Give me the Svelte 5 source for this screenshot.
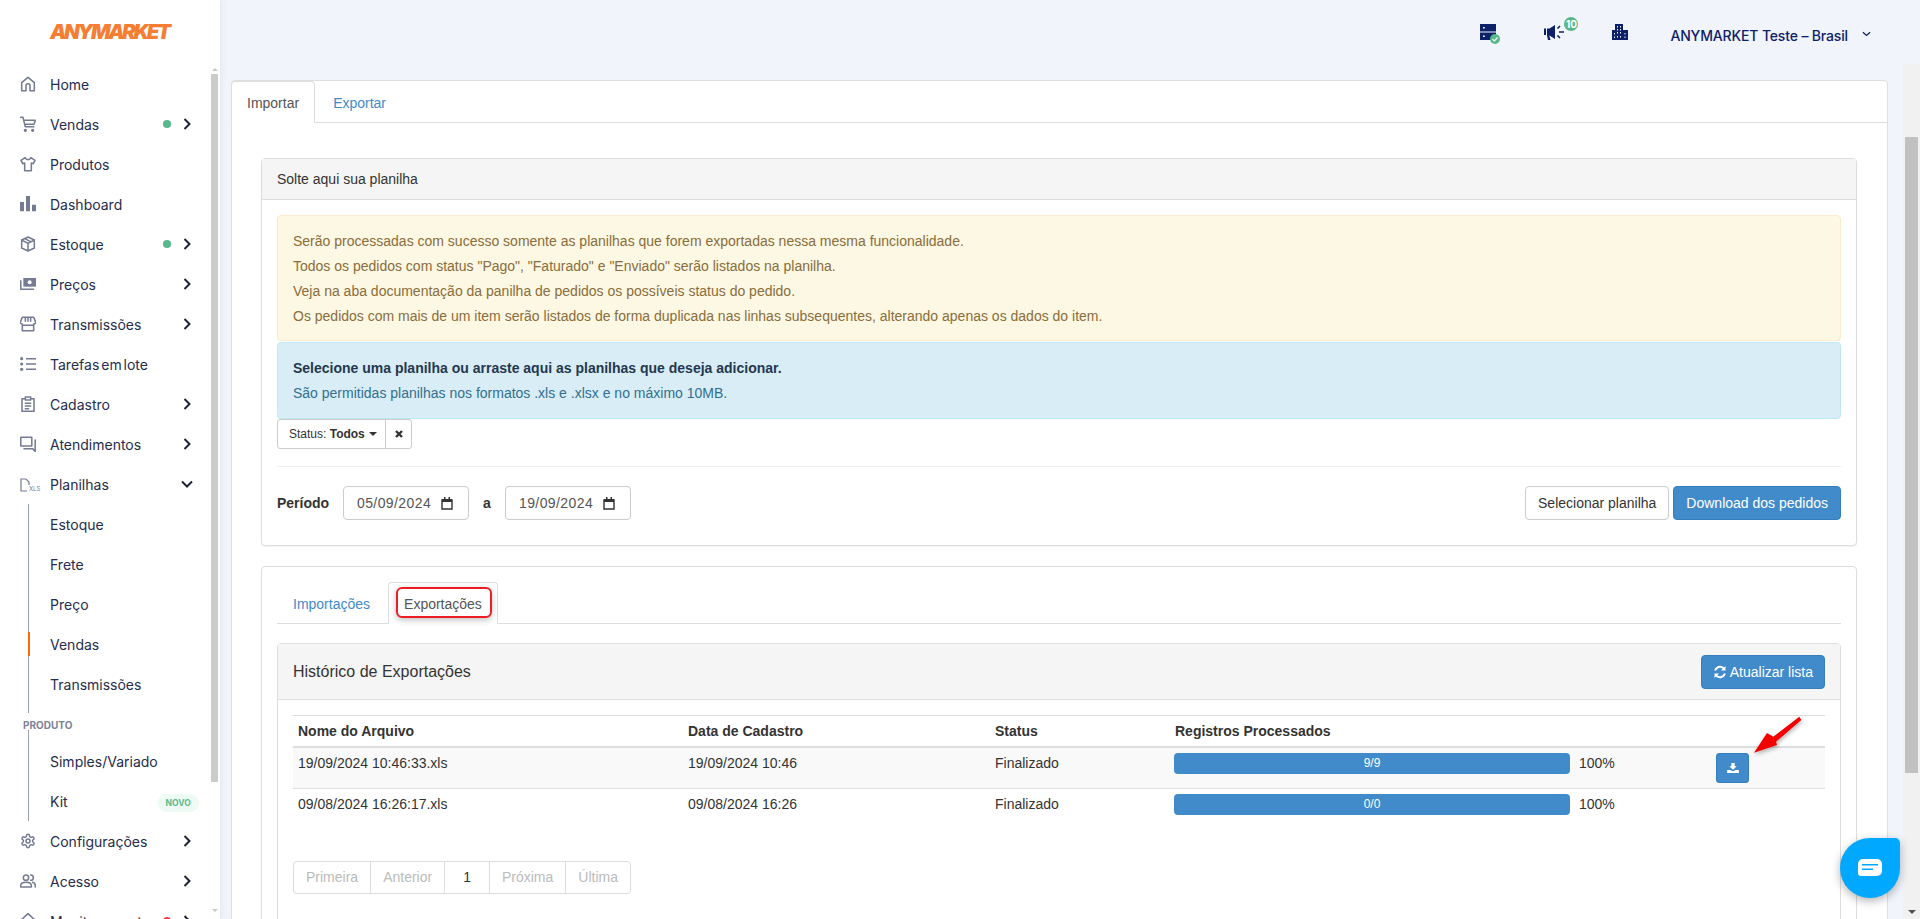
<script>
  const menu = [
    { label: 'Home', icon: 'home' },
    { label: 'Vendas', icon: 'cart', dot: true, arrow: true },
    { label: 'Produtos', icon: 'shirt' },
    { label: 'Dashboard', icon: 'bars' },
    { label: 'Estoque', icon: 'box', dot: true, arrow: true },
    { label: 'Preços', icon: 'money', arrow: true },
    { label: 'Transmissões', icon: 'store', arrow: true },
    { label: 'Tarefas em lote', icon: 'list', tight: true },
    { label: 'Cadastro', icon: 'clip', arrow: true },
    { label: 'Atendimentos', icon: 'chat', arrow: true },
    { label: 'Planilhas', icon: 'xls', open: true }
  ];
  const sub1 = ['Estoque', 'Frete', 'Preço', 'Vendas', 'Transmissões'];
  const rows = [
    { file: '19/09/2024 10:46:33.xls', date: '19/09/2024 10:46', bar: '9/9', btn: true },
    { file: '09/08/2024 16:26:17.xls', date: '09/08/2024 16:26', bar: '0/0', btn: false }
  ];
  const pages = ['Primeira', 'Anterior', '1', 'Próxima', 'Última'];
</script>

{#snippet icon(name)}
  <svg class="ic" viewBox="0 0 24 24" fill="none" stroke="currentColor" stroke-width="2.300" stroke-linecap="round" stroke-linejoin="round">
    {#if name === 'home'}
      <path d="M2.500 10 12 2l9.500 8v12H15v-7.500a3 3 0 0 0-6 0V22H2.500z" />
    {:else if name === 'cart'}
      <path d="M1 2h3.500l3.300 14h13M5.500 6.500H23l-2 6H7" /><circle cx="8" cy="21.500" r="1.300" fill="currentColor" /><circle cx="19" cy="21.500" r="1.300" fill="currentColor" />
    {:else if name === 'shirt'}
      <path d="M7.500 2.500 1.500 6.500 4 11.500l3-1V22h10V10.500l3 1 2.500-5-6-4c-1 2-2.600 3-4.500 3S8.500 4.500 7.500 2.500z" />
    {:else if name === 'bars'}
      <path fill="currentColor" stroke="none" d="M0 9h6v14H0zM9 0h6v23H9zM18 13h6v10h-6z" />
    {:else if name === 'box'}
      <path d="M12 1.500 2.500 6v12l9.500 4.500 9.500-4.500V6zM2.500 6l9.500 5 9.500-5M12 11v11.500M7 3.800l9.500 5" />
    {:else if name === 'money'}
      <path d="M5 3h19v13H5z" fill="currentColor" stroke="none" /><circle cx="14.500" cy="9.500" r="3" fill="#fff" stroke="none" /><path d="M1.200 7v13h19" />
    {:else if name === 'store'}
      <path d="M3.500 2h17l3 7a3 3 0 0 1-3 3v10h-17V12a3 3 0 0 1-3-3zM3.500 14h17M8 2v6M12 2v6M16 2v6" />
    {:else if name === 'list'}
      <circle cx="2.500" cy="4" r="2.400" fill="currentColor" stroke="none" /><circle cx="2.500" cy="12" r="2.400" fill="currentColor" stroke="none" /><circle cx="2.500" cy="20" r="2.400" fill="currentColor" stroke="none" /><path d="M9 4h15M9 12h15M9 20h15" stroke-linecap="butt" />
    {:else if name === 'clip'}
      <path d="M8 4H3v19h18V4h-5M8 1.500h8V6H8zM8 11h8M8 15h8M8 19h5" />
    {:else if name === 'chat'}
      <path d="M1.200 2h16.500v13H1.200zM22.800 6v17l-4-4H6" />
    {:else if name === 'gear'}
      <path d="M12.220 2h-.44a2 2 0 0 0-2 2v.18a2 2 0 0 1-1 1.730l-.43.250a2 2 0 0 1-2 0l-.15-.080a2 2 0 0 0-2.730.730l-.22.380a2 2 0 0 0 .730 2.730l.15.100a2 2 0 0 1 1 1.720v.510a2 2 0 0 1-1 1.740l-.15.090a2 2 0 0 0-.730 2.730l.22.380a2 2 0 0 0 2.730.730l.15-.080a2 2 0 0 1 2 0l.43.250a2 2 0 0 1 1 1.730V20a2 2 0 0 0 2 2h.44a2 2 0 0 0 2-2v-.18a2 2 0 0 1 1-1.730l.43-.250a2 2 0 0 1 2 0l.15.080a2 2 0 0 0 2.730-.730l.22-.390a2 2 0 0 0-.730-2.730l-.15-.080a2 2 0 0 1-1-1.740v-.5a2 2 0 0 1 1-1.740l.15-.090a2 2 0 0 0 .730-2.730l-.22-.380a2 2 0 0 0-2.730-.730l-.15.080a2 2 0 0 1-2 0l-.43-.250a2 2 0 0 1-1-1.730V4a2 2 0 0 0-2-2z" /><circle cx="12" cy="12" r="3" />
    {:else if name === 'users'}
      <circle cx="9" cy="7" r="4" /><path d="M1 21v-2c0-3 3-5 8-5s8 2 8 5v2zM16 3a4 4 0 0 1 0 8M19 14c2.500.6 4 2.500 4 5v2" />
    {:else if name === 'mon'}
      <path d="M12 1 1 11h3v11h16V11h3zM9 22v-6h6v6" />
    {/if}
  </svg>
{/snippet}

<div class="shell">
  <aside class="side">
    <div class="logo">ANYMARKET</div>
    <nav class="nav">
      {#each menu as m}
        <div class="item">
          <span class="ico">
            {#if m.icon === 'xls'}
              <span class="xls"><svg viewBox="0 0 10 14" fill="none" stroke="currentColor" stroke-width="1.200"><path d="M7 13H1V1h5l3 3v3" /></svg><small>XLS</small></span>
            {:else}
              {@render icon(m.icon)}
            {/if}
          </span>
          <span class="lbl" class:tight={m.tight}>{m.label}</span>
          {#if m.dot}<span class="dot"></span>{/if}
          {#if m.arrow}
            <svg class="chev" viewBox="0 0 10 14"><path d="M2.500 2 7.500 7l-5 5" /></svg>
          {/if}
          {#if m.open}
            <svg class="chev down" viewBox="0 0 14 10"><path d="M2 2.500 7 7.500l5-5" /></svg>
          {/if}
        </div>
      {/each}
      <div class="subs first">
        {#each sub1 as s}
          <div class="sub" class:cur={s === 'Vendas'}>{s}</div>
        {/each}
      </div>
      <div class="group">PRODUTO</div>
      <div class="subs second">
        <div class="sub">Simples/Variado</div>
        <div class="sub">Kit<span class="novo">NOVO</span></div>
      </div>
      <div class="item"><span class="ico">{@render icon('gear')}</span><span class="lbl">Configurações</span><svg class="chev" viewBox="0 0 10 14"><path d="M2.500 2 7.500 7l-5 5" /></svg></div>
      <div class="item"><span class="ico">{@render icon('users')}</span><span class="lbl">Acesso</span><svg class="chev" viewBox="0 0 10 14"><path d="M2.500 2 7.500 7l-5 5" /></svg></div>
      <div class="item"><span class="ico">{@render icon('mon')}</span><span class="lbl">Monitoramento</span><span class="dot red"></span><svg class="chev" viewBox="0 0 10 14"><path d="M2.500 2 7.500 7l-5 5" /></svg></div>
    </nav>
    <div class="sb-side"><i class="up"></i><b></b></div>
    <i class="sb-side-dn"></i>
  </aside>

  <div class="main">
    <header class="top">
      <span class="ti srv">
        <svg viewBox="0 0 16 16"><path fill="#0c2169" fill-rule="evenodd" d="M0 0h16v7.400H0zM0 8.600h16V16H0zM3 3v1.500h1.800V3zM3 11.500V13h1.800v-1.500z" /></svg>
        <em><svg viewBox="0 0 10 10"><path d="M2.500 5.200 4.300 7l3.200-3.500" fill="none" stroke="#fff" stroke-width="1.200" /></svg></em>
      </span>
      <span class="ti meg">
        <svg viewBox="0 0 21 16"><path fill="#0c2169" d="M0 4.500h2v6.500H0zM3 4.500h2.500L11 1v14l-5.500-3.500H5.300L6.500 16H4l-1-4.500z" /><path stroke="#0c2169" stroke-width="1.600" d="M13.500 4.500 16 2M15 8h5M13.500 11.500l2.500 2.500" /></svg>
        <em class="n">10</em>
      </span>
      <span class="ti bld">
        <svg viewBox="0 0 16 16"><path fill="#0c2169" fill-rule="evenodd" d="M3 0h8v6h5v10H0V6h3zM5 2v1.500h1V2zM8 2v1.500h1V2zM5 5v1.500h1V5zM8 5v1.500h1V5zM5 8v1.500h1V8zM8 8v1.500h1V8zM2 9v1.500h1V9zM12.500 9v1.500h1V9zM2 12.500V14h1v-1.500zM5 12v1.500h1V12zM8 12v1.500h1V12zM12.500 12.500V14h1v-1.500z" /></svg>
      </span>
      <span class="acct">ANYMARKET Teste – Brasil</span>
      <svg class="acct-chev" viewBox="0 0 10 6"><path d="M1 1l4 3.500L9 1" /></svg>
    </header>

    <section class="card">
      <div class="tabs">
        <span class="tab on">Importar</span>
        <span class="tab link">Exportar</span>
      </div>
      <div class="card-body">
        <div class="panel">
          <div class="ph">Solte aqui sua planilha</div>
          <div class="pb first">
            <div class="alert warn">
              <p>Serão processadas com sucesso somente as planilhas que forem exportadas nessa mesma funcionalidade.</p>
              <p>Todos os pedidos com status "Pago", "Faturado" e "Enviado" serão listados na planilha.</p>
              <p>Veja na aba documentação da panilha de pedidos os possíveis status do pedido.</p>
              <p>Os pedidos com mais de um item serão listados de forma duplicada nas linhas subsequentes, alterando apenas os dados do item.</p>
            </div>
            <div class="alert info">
              <p><strong>Selecione uma planilha ou arraste aqui as planilhas que deseja adicionar.</strong></p>
              <p>São permitidas planilhas nos formatos .xls e .xlsx e no máximo 10MB.</p>
            </div>
            <div class="status">
              <span class="st-main">Status: <strong>Todos</strong><i class="caret"></i></span>
              <span class="st-x"><svg viewBox="0 0 10 10"><path d="M2 2l6 6M8 2l-6 6" /></svg></span>
            </div>
            <hr />
            <div class="period">
              <strong class="plabel">Período</strong>
              <span class="date">05/09/2024{@render cal()}</span>
              <strong class="a">a</strong>
              <span class="date">19/09/2024{@render cal()}</span>
              <span class="grow"></span>
              <span class="btn def">Selecionar planilha</span>
              <span class="btn pri">Download dos pedidos</span>
            </div>
          </div>
        </div>

        <div class="panel second">
          <div class="pb">
            <div class="tabs sub-tabs">
              <span class="tab link">Importações</span>
              <span class="tab on">Exportações<span class="hl"></span></span>
            </div>
            <div class="hist">
              <div class="hh">
                <span>Histórico de Exportações</span>
                <span class="btn pri ref">
                  <svg viewBox="0 0 14 14"><path fill="#fff" d="M12.500 1v4.500H8l1.700-1.700A4 4 0 0 0 3.200 5.500H1.200A6 6 0 0 1 11.100 2.400zM1.500 13V8.500H6L4.300 10.200a4 4 0 0 0 6.500-1.700h2a6 6 0 0 1-9.900 3.100z" /></svg>
                  Atualizar lista
                </span>
              </div>
              <div class="hb">
                <table>
                  <colgroup><col class="c1" /><col class="c2" /><col class="c3" /><col class="c4" /><col class="c5" /><col /></colgroup>
                  <thead>
                    <tr><th>Nome do Arquivo</th><th>Data de Cadastro</th><th>Status</th><th colspan="3">Registros Processados</th></tr>
                  </thead>
                  <tbody>
                    {#each rows as r, i}
                      <tr class:odd={i === 0}>
                        <td>{r.file}</td>
                        <td>{r.date}</td>
                        <td>Finalizado</td>
                        <td><div class="bar">{r.bar}</div></td>
                        <td class="pct">100%</td>
                        <td>
                          {#if r.btn}
                            <span class="dl"><svg viewBox="0 0 14 12"><path fill="#fff" d="M5 0h4v4h2.500L7 8 2.500 4H5zM0 8.500h3.500L7 10l3.500-1.500H14V12H0z" /></svg></span>
                          {/if}
                        </td>
                      </tr>
                    {/each}
                  </tbody>
                </table>
                <div class="pager">
                  {#each pages as p}
                    <span class:cur={p === '1'}>{p}</span>
                  {/each}
                </div>
              </div>
            </div>
          </div>
        </div>
      </div>
    </section>
  </div>

  <div class="sb-page"><b></b><i class="dn"></i></div>

  <svg class="arrow" viewBox="0 0 56 46"><path fill="#f40000" d="M4 40.700 17 21 23.300 24.700 49.300 4.700 51.300 8 26 29.700 27 33z" /></svg>
  <div class="chatb">
    <svg viewBox="0 0 24 18"><path fill="#fff" fill-rule="evenodd" d="M5 0h14a5 5 0 0 1 5 5v7a5 5 0 0 1-5 5H3a3 3 0 0 1-3-3V5a5 5 0 0 1 5-5zM4 5v1.500h16V5zM4 9.500V11h11V9.500z" /></svg>
  </div>
</div>

{#snippet cal()}
  <svg class="cal" viewBox="0 0 12 13"><path fill="none" stroke="#333" stroke-width="1.400" d="M1 3h10v9H1z" /><path fill="#333" d="M1 2h10v3H1zM3 0h1.500v2H3zM7.500 0H9v2H7.500z" /></svg>
{/snippet}

<style>
  :global(body) { margin: 0; background: #f1f4fa; }
  .shell { position: relative; display: flex; height: 919px; width: 1920px; overflow: hidden; background: #f1f4fa; font-family: "Liberation Sans", Arial, sans-serif; font-size: 14px; color: #333; }

  .side { position: relative; width: 220px; flex: none; background: #fff; font-family: Inter, sans-serif; box-sizing: border-box; box-shadow: 1px 0 6px rgba(60,70,110,.08); }
  .logo { height: 64px; padding-top: 21px; box-sizing: border-box; padding-left: 50px; color: #f57e33; font-weight: 900; font-style: italic; font-size: 20.500px; letter-spacing: -2.350px; line-height: 22px; }
  .nav { display: flex; flex-direction: column; }
  .item { display: flex; align-items: center; height: 40px; padding-left: 20px; color: #262c4d; font-size: 14px; }
  .ico { width: 16px; height: 16px; margin-right: 14px; color: #757b93; display: flex; }
  .ic { width: 16px; height: 16px; }
  .lbl { flex: 1; white-space: nowrap; }
  .lbl.tight { word-spacing: -2px; }
  .dot { width: 8px; height: 8px; border-radius: 50%; background: #57b88a; margin-right: 11px; }
  .dot.red { background: #f03a3a; }
  .chev { width: 10px; height: 14px; fill: none; stroke: #1e2238; stroke-width: 2; margin-right: 28px; margin-left: 0; }
  .chev.down { width: 14px; height: 10px; margin-right: 26px; }
  .xls { display: flex; align-items: flex-end; }
  .xls svg { width: 10px; height: 14px; }
  .xls small { font-size: 6px; line-height: 7px; margin-left: -1px; letter-spacing: 0; }
  .subs { border-left: 1px solid #9aa0b8; margin-left: 28px; }
  .subs.first { padding-bottom: 9px; }
  .subs.second { padding-top: 11px; }
  .sub { position: relative; display: flex; align-items: center; height: 40px; padding-left: 21px; color: #262c4d; }
  .sub.cur::before { content: ""; position: absolute; left: -1px; top: 8px; width: 2px; height: 24px; background: #ff6a00; }
  .group { height: 14px; margin: 3px 0 0 23px; font-size: 10px; font-weight: 700; line-height: 18px; color: #7d8296; letter-spacing: 0; }
  .novo { margin: 3px 0 0 90px; width: 41px; height: 18px; border-radius: 9px; background: #edfbf4; color: #5fb98f; font-size: 8.500px; font-weight: 700; display: flex; align-items: center; justify-content: center; }
  .sb-side { position: absolute; left: 211px; top: 68px; width: 7px; display: flex; flex-direction: column; }
  .sb-side b { display: block; height: 708px; background: #cbcbcb; margin-top: 3px; }
  .sb-side i { display: block; width: 0; height: 0; border: 3px solid transparent; margin: 0 auto; }
  .sb-side .up { border-bottom-color: #c9c9c9; border-top: 0; }
  .sb-side-dn { position: absolute; left: 212px; top: 909px; border: 3px solid transparent; border-top-color: #c9c9c9; border-bottom: 0; }

  .main { flex: 1; min-width: 0; padding: 0 32px 0 11px; }
  .top { height: 80px; display: flex; align-items: center; color: #0c2169; box-sizing: border-box; padding: 0 0 16px 0; justify-content: flex-end; }
  .ti { position: relative; display: block; }
  .ti > svg { display: block; }
  .srv { width: 16px; height: 16px; margin-right: 48px; }
  .srv > svg { width: 16px; height: 16px; }
  .srv em { position: absolute; left: 10px; top: 10px; width: 10px; height: 10px; border-radius: 50%; background: #57b88a; display: block; }
  .srv em svg { display: block; width: 10px; height: 10px; }
  .meg { width: 21px; height: 16px; margin-right: 47px; }
  .meg > svg { width: 21px; height: 16px; }
  .meg .n { position: absolute; left: 20px; top: -7px; width: 14px; height: 14px; border-radius: 50%; background: #57b88a; color: #fff; font: 700 10px/14px Inter, sans-serif; text-align: center; }
  .bld { width: 16px; height: 16px; margin-right: 42px; }
  .bld svg { width: 16px; height: 16px; }
  .acct { font: 500 14px Inter, sans-serif; color: #0c2169; white-space: nowrap; letter-spacing: -.15px; margin-top: 6px; }
  .acct-chev { width: 9px; height: 6px; margin: 4px 17px 0 14px; fill: none; stroke: #0c2169; stroke-width: 1.400; }

  .card { background: #fff; border: 1px solid #dfdfdf; border-radius: 4px; height: 900px; box-sizing: border-box; }
  .tabs { display: flex; border-bottom: 1px solid #ddd; height: 41px; box-sizing: content-box; }
  .tab { position: relative; height: 42px; box-sizing: border-box; padding: 11px 15px 0; line-height: 20px; border: 1px solid transparent; border-radius: 4px 4px 0 0; margin-right: 2px; }
  .tab.on { background: #fff; border-color: #ddd; border-bottom-color: #fff; color: #555; margin-bottom: -1px; }
  .tab.link { color: #428bca; }
  .card > .tabs .tab:first-child { margin-left: -1px; }
  .card-body { padding: 35px 30px 0 29px; }
  .panel { border: 1px solid #ddd; border-radius: 4px; background: #fff; box-shadow: 0 1px 1px rgba(0,0,0,.05); }
  .panel.second { margin-top: 20px; }
  .ph { background: #f5f5f5; border-bottom: 1px solid #ddd; height: 40px; line-height: 40px; padding-left: 15px; }
  .pb { padding: 15px; }
  .pb.first { padding-bottom: 25px; }
  .alert { border: 1px solid; border-radius: 4px; padding: 13px 15px 12px; box-sizing: border-box; }
  .alert p { margin: 0; line-height: 25px; }
  .warn { background: #fcf8e3; border-color: #faebcc; color: #8a6d3b; height: 126px; margin-bottom: 1px; }
  .info { background: #d9edf7; border-color: #bce8f1; color: #31708f; height: 77px; }
  .info strong { color: #24384e; }
  .status { display: flex; height: 30px; font-size: 12px; }
  .st-main, .st-x { display: flex; align-items: center; border: 1px solid #ccc; box-sizing: border-box; background: #fff; }
  .st-main { width: 109px; padding-left: 11px; border-radius: 3px 0 0 3px; white-space: pre; }
  .st-x { width: 27px; margin-left: -1px; justify-content: center; border-radius: 0 3px 3px 0; }
  .st-x svg { width: 10px; height: 10px; fill: none; stroke: #333; stroke-width: 2.400; }
  .caret { width: 0; height: 0; border: 4px solid transparent; border-top-color: #333; border-bottom: 0; margin-left: 4px; }
  hr { border: 0; border-top: 1px solid #eee; margin: 17px 0 19px; }
  .period { display: flex; align-items: center; height: 34px; }
  .plabel { width: 66px; }
  .date { display: flex; align-items: center; justify-content: space-between; width: 126px; height: 34px; box-sizing: border-box; border: 1px solid #ccc; border-radius: 4px; padding: 0 15px 0 13px; color: #555; margin-right: 0; letter-spacing: .4px; }
  .cal { width: 12px; height: 13px; }
  .a { width: 36px; text-align: center; }
  .grow { flex: 1; }
  .btn { display: inline-flex; align-items: center; justify-content: center; height: 34px; box-sizing: border-box; padding: 0 12px; border: 1px solid; border-radius: 4px; white-space: nowrap; }
  .def { border-color: #ccc; color: #333; background: #fff; margin-right: 4px; }
  .pri { background: #428bca; border-color: #357ebd; color: #fff; }
  .sub-tabs { margin-bottom: 19px; }
  .hl { position: absolute; left: 7px; top: 4px; right: 5px; height: 31px; border: 2px solid #ed1c24; border-radius: 6px; box-sizing: border-box; box-shadow: 0 2px 6px rgba(0,0,0,.25); }
  .hist { border: 1px solid #ddd; border-radius: 4px; }
  .hh { display: flex; align-items: center; justify-content: space-between; background: #f5f5f5; border-bottom: 1px solid #ddd; height: 55px; padding: 0 15px; font-size: 16px; }
  .ref { font-size: 14px; gap: 3px; padding: 0 11px; }
  .ref svg { width: 14px; height: 14px; }
  .hb { padding: 15px 15px 30px; }
  table { border-collapse: collapse; width: 100%; table-layout: fixed; }
  .c1 { width: 390px; } .c2 { width: 307px; } .c3 { width: 180px; } .c4 { width: 404px; } .c5 { width: 136px; }
  th { text-align: left; font-weight: 700; padding: 5px; line-height: 20px; border-top: 1px solid #ddd; border-bottom: 2px solid #ddd; }
  td { padding: 5px; line-height: 20px; border-bottom: 1px solid #ddd; vertical-align: top; height: 41px; box-sizing: border-box; }
  tbody tr:last-child td { border-bottom: 0; }
  tr.odd td { background: #f9f9f9; }
  .bar { height: 21px; background: #428bca; border-radius: 4px; color: #fff; font-size: 12px; line-height: 20px; text-align: center; margin: 0 -1px; }
  .dl { display: flex; align-items: center; justify-content: center; width: 33px; height: 30px; background: #428bca; border: 1px solid #357ebd; border-radius: 3px; box-sizing: border-box; margin-left: 1px; }
  .dl svg { width: 12px; height: 10px; }
  .pager { display: inline-flex; margin-top: 31px; border: 1px solid #ddd; border-radius: 4px; height: 33px; box-sizing: border-box; }
  .pager span { padding: 0 12px; line-height: 31px; color: #bbb; border-left: 1px solid #ddd; }
  .pager span:first-child { border-left: 0; }
  .pager span.cur { color: #333; padding: 0 18px; }

  .sb-page { position: absolute; right: 0; top: 64px; bottom: 0; width: 17px; background: #f1f1f1; }
  .sb-page b { display: block; margin: 73px 2px 0; height: 636px; background: #c1c1c1; }
  .sb-page i { position: absolute; left: 5px; width: 0; height: 0; border: 4px solid transparent; }
  .sb-page .dn { bottom: 5px; border-top-color: #505050; border-bottom: 0; }
  .arrow { position: absolute; left: 1750px; top: 712px; width: 56px; height: 46px; filter: drop-shadow(1px 2px 2px rgba(0,0,0,.3)); }
  .chatb { position: absolute; left: 1840px; top: 838px; width: 60px; height: 60px; border-radius: 30px 5px 30px 30px; background: #00a8ff; box-shadow: 0 3px 10px rgba(0,0,0,.3); display: flex; align-items: center; justify-content: center; }
  .chatb svg { width: 24px; height: 18px; }
</style>
